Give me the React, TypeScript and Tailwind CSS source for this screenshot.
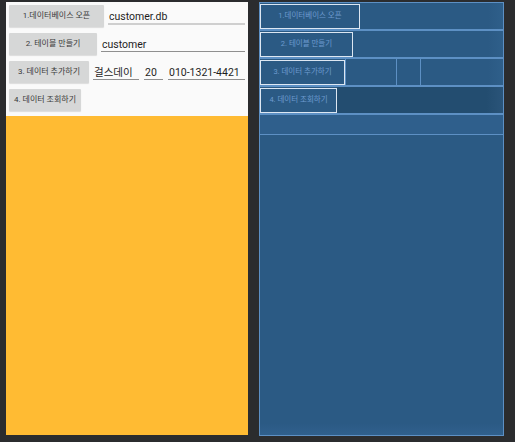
import React from "react";

const F = "font-['Roboto','Noto_Sans_CJK_KR',sans-serif]";

function Btn({ w, label }: { w: string; label: string }) {
  return (
    <div
      className={`${w} h-[22px] shrink-0 bg-[#d6d7d7] rounded-[1px] shadow-[0_1px_1px_rgba(0,0,0,0.12)] flex items-center justify-center text-[8px] leading-none text-[#3a3a3a] whitespace-nowrap`}
    >
      {label}
    </div>
  );
}

function Edit({
  text,
  cls,
  first,
}: {
  text: string;
  cls: string;
  first?: boolean;
}) {
  return (
    <div className={`${cls} h-[22px] flex flex-col`}>
      <div
        className={`pt-[5px] pl-[1px] text-[10.5px] leading-[13px] text-[#1e1e1e] whitespace-nowrap ${
          first ? "border-b-2 border-[#cfcfcf]" : "border-b border-[#8f8f8f]"
        }`}
      >
        {text}
      </div>
    </div>
  );
}

function BpBtn({ w, label }: { w: string; label: string }) {
  return (
    <div
      className={`${w} h-[25px] shrink-0 border-[1.5px] border-[#dde7f2] flex items-center justify-center text-[7.5px] leading-none text-[#6d9bcf] whitespace-nowrap`}
    >
      {label}
    </div>
  );
}

export default function App() {
  return (
    <div
      className={`w-[515px] h-[442px] bg-[#2b2c2e] flex items-start pt-[2px] pl-[6px] gap-[11px] overflow-hidden ${F}`}
    >
      {/* Design view */}
      <div className="w-[242px] h-[433px] flex flex-col shrink-0">
        <div className="h-[114px] bg-[#fafafa] flex flex-col pt-[3px] px-[3px] gap-[6px]">
          <div className="flex gap-[4px]">
            <Btn w="w-[95px]" label="1.데이터베이스 오픈" />
            <Edit text="customer.db" cls="flex-1" first />
          </div>
          <div className="flex gap-[4px]">
            <Btn w="w-[88px]" label="2. 테이블 만들기" />
            <Edit text="customer" cls="flex-1" />
          </div>
          <div className="flex">
            <Btn w="w-[80px]" label="3. 데이터 추가하기" />
            <Edit text="걸스데이" cls="w-[46px] ml-[4px]" />
            <Edit text="20" cls="w-[19px] ml-[5px]" />
            <Edit text="010-1321-4421" cls="flex-1 ml-[5px]" />
          </div>
          <div className="flex">
            <Btn w="w-[72px]" label="4. 데이터 조회하기" />
          </div>
        </div>
        <div className="flex-1 bg-[#ffbb33]" />
      </div>

      {/* Blueprint view */}
      <div className="w-[245px] h-[434px] shrink-0 bg-[#2b5a84] border border-[#5d90c4] flex flex-col">
        <div className="h-[28px] border-b-2 border-[#5d90c4] flex items-center bg-[linear-gradient(to_right,#2b5a84_94%,#2f5f8a)]">
          <BpBtn w="w-[100px]" label="1.데이터베이스 오픈" />
        </div>
        <div className="h-[28px] border-b-2 border-[#5d90c4] flex items-center bg-[linear-gradient(to_right,#2b5a84_94%,#2f5f8a)]">
          <BpBtn w="w-[93px]" label="2. 테이블 만들기" />
        </div>
        <div className="h-[28px] border-b-2 border-[#5d90c4] flex items-stretch bg-[linear-gradient(to_right,#2b5a84_94%,#2f5f8a)]">
          <div className="flex items-center">
            <BpBtn w="w-[85px]" label="3. 데이터 추가하기" />
          </div>
          <div className="w-[51px] border-l border-[#5d90c4]" />
          <div className="w-[24px] border-l border-[#5d90c4]" />
          <div className="flex-1 border-l border-[#5d90c4]" />
        </div>
        <div className="h-[28px] border-b-2 border-[#5d90c4] flex items-stretch">
          <div className="flex items-center bg-[#2b5a84]">
            <BpBtn w="w-[77px]" label="4. 데이터 조회하기" />
          </div>
          <div className="flex-1 bg-[linear-gradient(to_right,#234d70_90%,#2a5479)]" />
        </div>
        <div className="h-[20px] bg-[#2f5f8c] border-b border-[#5d90c4]" />
        <div className="flex-1 bg-[linear-gradient(to_bottom,#2b5a84_96%,#30608d)]" />
      </div>
    </div>
  );
}
